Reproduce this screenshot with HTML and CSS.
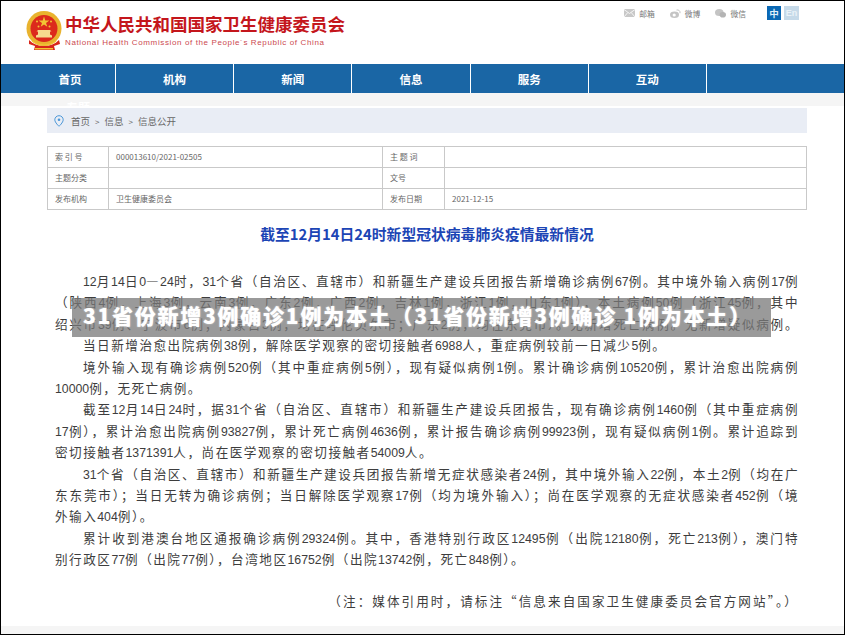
FILE: index.html
```html
<!DOCTYPE html>
<html lang="zh">
<head>
<meta charset="utf-8">
<title>截至12月14日24时新型冠状病毒肺炎疫情最新情况</title>
<link rel="stylesheet" href="styles.css">
</head>
<body>
<div class="page">
  <header class="top">
    <div class="brand">
      <svg class="emblem" viewBox="0 0 36 40" width="36" height="40" aria-hidden="true">
        <circle cx="18" cy="17.500" r="17.500" fill="#e9b32e"/>
        <circle cx="18" cy="17.500" r="13.500" fill="#dc2a1c"/>
        <polygon points="18,5.500 19.300,9.500 23.400,9.500 20,11.900 21.300,15.800 18,13.400 14.700,15.800 16,11.900 12.600,9.500 16.700,9.500" fill="#f2c534"/>
        <circle cx="11" cy="10.500" r="1" fill="#f2c534"/><circle cx="12.500" cy="15.500" r="1" fill="#f2c534"/>
        <circle cx="25" cy="10.500" r="1" fill="#f2c534"/><circle cx="23.500" cy="15.500" r="1" fill="#f2c534"/>
        <path d="M12 19h12l1.500 1.500h-1.500v3l2 1v2h-16v-2l2-1v-3h-1.500z" fill="#f6dc8e"/>
        <path d="M3 29c4 4 9 6 15 6s11-2 15-6l1 4-6 2 1 4H8l1-4-6-2z" fill="#d8261a"/>
        <path d="M9 37h18v1.500H9z" fill="#f2c534"/>
        <path d="M6 30c3 2.500 7 4 12 4s9-1.500 12-4" fill="none" stroke="#f2c534" stroke-width="1.200"/>
      </svg>
      <div class="brand-text">
        <div class="brand-cn">中华人民共和国国家卫生健康委员会</div>
        <div class="brand-en">National Health Commission of the People´s Republic of China</div>
      </div>
    </div>
    <div class="tools">
      <span class="tool">
        <svg viewBox="0 0 11 8" width="11" height="8" aria-hidden="true"><rect width="11" height="8" fill="#c8c8c8"/><path d="M0 .5l5.500 4 5.500-4M0 8l3.800-4.500M11 8L7.200 3.500" fill="none" stroke="#fff" stroke-width=".8"/></svg>
        邮箱</span>
      <span class="tool">
        <svg viewBox="0 0 11 9" width="11" height="9" aria-hidden="true"><ellipse cx="4.500" cy="5.700" rx="4.500" ry="3.300" fill="#c4c4c4"/><circle cx="4.200" cy="6" r="1.600" fill="#fff"/><path d="M6.500 1c2.200-.5 4 1 3.500 3.200" fill="none" stroke="#c4c4c4"/></svg>
        微博</span>
      <span class="tool">
        <svg viewBox="0 0 11 9" width="11" height="9" aria-hidden="true"><ellipse cx="4.300" cy="3.500" rx="4.300" ry="3.500" fill="#c4c4c4"/><ellipse cx="7.800" cy="5.800" rx="3.200" ry="2.800" fill="#b4b4b4"/></svg>
        微信</span>
      <span class="lang lang-cn">中</span>
      <span class="lang lang-en">En</span>
    </div>
  </header>

  <nav class="nav">
    <a class="nav-item nav-first">首页</a>
    <a class="nav-item">机构</a>
    <a class="nav-item">新闻</a>
    <a class="nav-item">信息</a>
    <a class="nav-item">服务</a>
    <a class="nav-item">互动</a>
  </nav>
  <div class="strip">专题</div>

  <main class="main">
    <div class="crumb">
      <svg viewBox="0 0 10 12" width="10" height="12" aria-hidden="true"><path d="M5 .7C2.600.7.800 2.500.800 4.800.800 7.500 5 11.300 5 11.300s4.200-3.800 4.200-6.500C9.200 2.500 7.400.7 5 .7z" fill="none" stroke="#4b97d8" stroke-width="1"/><circle cx="5" cy="4.700" r="1.300" fill="#4b97d8"/></svg>
      <span class="crumb-path">首页<i>&gt;</i>信息<i>&gt;</i>信息公开</span>
    </div>

    <div class="meta">
      <div class="cell">索 引 号</div><div class="cell cell-val">000013610/2021-02505</div><div class="cell">主 题 词</div><div class="cell"></div>
      <div class="cell">主题分类</div><div class="cell"></div><div class="cell">文号</div><div class="cell"></div>
      <div class="cell">发布机构</div><div class="cell cell-val">卫生健康委员会</div><div class="cell">发布日期</div><div class="cell cell-val">2021-12-15</div>
    </div>

    <h1 class="title">截至12月14日24时新型冠状病毒肺炎疫情最新情况</h1>

    <article class="body">
      <p class="ln in"><span class="n">12</span>月<span class="n">14</span>日<span class="n">0</span>—<span class="n">24</span>时，<span class="n">31</span>个省（自治区、直辖市）和新疆生产建设兵团报告新增确诊病例<span class="n">67</span>例。其中境外输入病例<span class="n">17</span>例</p>
      <p class="ln">（陕西<span class="n">4</span>例，上海<span class="n">3</span>例，云南<span class="n">3</span>例，广东<span class="n">2</span>例，广西<span class="n">2</span>例，吉林<span class="n">1</span>例，浙江<span class="n">1</span>例，山东<span class="n">1</span>例），本土病例<span class="n">50</span>例（浙江<span class="n">45</span>例，其中</p>
      <p class="ln">绍兴市<span class="n">39</span>例、宁波市<span class="n">6</span>例；内蒙古<span class="n">3</span>例，均在呼伦贝尔市；广东<span class="n">2</span>例，均在东莞市）。无新增死亡病例。无新增疑似病例。</p>
      <p class="ln in end">当日新增治愈出院病例<span class="n">38</span>例，解除医学观察的密切接触者<span class="n">6988</span>人，重症病例较前一日减少<span class="n">5</span>例。</p>
      <p class="ln in">境外输入现有确诊病例<span class="n">520</span>例（其中重症病例<span class="n">5</span>例），现有疑似病例<span class="n">1</span>例。累计确诊病例<span class="n">10520</span>例，累计治愈出院病例</p>
      <p class="ln end"><span class="n">10000</span>例，无死亡病例。</p>
      <p class="ln in">截至<span class="n">12</span>月<span class="n">14</span>日<span class="n">24</span>时，据<span class="n">31</span>个省（自治区、直辖市）和新疆生产建设兵团报告，现有确诊病例<span class="n">1460</span>例（其中重症病例</p>
      <p class="ln"><span class="n">17</span>例），累计治愈出院病例<span class="n">93827</span>例，累计死亡病例<span class="n">4636</span>例，累计报告确诊病例<span class="n">99923</span>例，现有疑似病例<span class="n">1</span>例。累计追踪到</p>
      <p class="ln end">密切接触者<span class="n">1371391</span>人，尚在医学观察的密切接触者<span class="n">54009</span>人。</p>
      <p class="ln in"><span class="n">31</span>个省（自治区、直辖市）和新疆生产建设兵团报告新增无症状感染者<span class="n">24</span>例，其中境外输入<span class="n">22</span>例，本土<span class="n">2</span>例（均在广</p>
      <p class="ln">东东莞市）；当日无转为确诊病例；当日解除医学观察<span class="n">17</span>例（均为境外输入）；尚在医学观察的无症状感染者<span class="n">452</span>例（境</p>
      <p class="ln end">外输入<span class="n">404</span>例）。</p>
      <p class="ln in">累计收到港澳台地区通报确诊病例<span class="n">29324</span>例。其中，香港特别行政区<span class="n">12495</span>例（出院<span class="n">12180</span>例，死亡<span class="n">213</span>例），澳门特</p>
      <p class="ln end">别行政区<span class="n">77</span>例（出院<span class="n">77</span>例），台湾地区<span class="n">16752</span>例（出院<span class="n">13742</span>例，死亡<span class="n">848</span>例）。</p>
      <p class="note">（注：媒体引用时，请标注“信息来自国家卫生健康委员会官方网站”。）</p>
    </article>
  </main>
  <div class="foot"></div>

  <div class="banner">31省份新增3例确诊1例为本土（31省份新增3例确诊 1例为本土）</div>
</div>
</body>
</html>
```

FILE: styles.css
```css
* { box-sizing: border-box; }
html, body { margin: 0; padding: 0; background: #fff; }
body { width: 845px; height: 635px; overflow: hidden; font-family: "Noto Sans CJK SC", "Liberation Sans", sans-serif; color: #333; }
.page { position: relative; height: 635px; display: flex; flex-direction: column; border: 1px solid #000; overflow: hidden; }

.top { height: 63px; flex: none; display: flex; justify-content: space-between; align-items: flex-start; }
.brand { display: flex; gap: 3px; padding: 10px 0 0 25px; }
.emblem { display: block; }
.brand-text { padding-top: 3px; }
.brand-cn { font-size: 17.500px; line-height: 20px; font-weight: 700; color: #c4161c; white-space: nowrap; }
.brand-en { font-family: "Liberation Sans", sans-serif; font-size: 8px; line-height: 10px; margin-top: 4px; letter-spacing: .62px; color: #cc4a50; white-space: nowrap; }

.tools { display: flex; align-items: center; height: 14px; margin: 5px 45px 0 0; font-size: 7.800px; color: #777; }
.tool { display: flex; align-items: center; gap: 4px; margin-right: 15px; }
.lang { width: 14px; height: 14px; display: flex; align-items: center; justify-content: center; font-size: 9.500px; font-weight: 700; color: #dfeefa; background: #0a68b4; }
.lang-cn { margin-left: 6px; margin-right: 3px; }
.lang-en { width: 15px; background: #c6dae9; color: #eaf2f8; font-family: "Liberation Sans", sans-serif; font-size: 9px; }

.nav { display: flex; height: 29px; flex: none; background: #1a66a5; }
.nav-item { width: 118.200px; border-right: 1px solid #fff; display: flex; align-items: center; justify-content: center; font-size: 11.500px; font-weight: 700; color: #fff; }
.nav-first { width: 115px; padding-left: 24px; }
.strip { height: 13px; flex: none; padding: 8px 0 0 65px; overflow: hidden; background: #f5f5f5; color: #fff; font-size: 12px; font-weight: 700; line-height: 14px; }

.main { flex: 1; min-height: 0; padding: 2px 37px 0 46px; }
.crumb { height: 25px; background: #e9edf5; display: flex; align-items: center; gap: 7px; padding-left: 7px; }
.crumb-path { padding-top: 1px; font-size: 9.500px; color: #666; }
.crumb-path i { font-style: normal; margin: 0 5px; font-size: 8px; }

.meta { display: grid; grid-template-columns: 61px 274px 62px 1fr; grid-auto-rows: 21px; height: 64px; margin-top: 13px; border-top: 1px solid #c9c9c9; border-left: 1px solid #c9c9c9; }
.cell { border-right: 1px solid #c9c9c9; border-bottom: 1px solid #c9c9c9; padding-left: 7px; font-size: 8px; line-height: 19px; color: #666; }

.title { margin: 13px 0 0; font-size: 14.800px; line-height: 22px; font-weight: 700; color: #1c45b5; text-align: center; white-space: nowrap; }

.body { margin-top: 25px; padding-left: 8px; width: 752px; font-size: 12.600px; letter-spacing: 1.500px; color: #3d3d3d; }
.ln { margin: 0; height: 21.400px; line-height: 21.400px; text-align: justify; text-align-last: justify; white-space: nowrap; overflow: hidden; }
.n { font-family: "Liberation Sans", sans-serif; font-size: 12.300px; letter-spacing: 0; }
.in { padding-left: 28px; }
.end { text-align-last: left; }
.note { margin: 22px 0 0; line-height: 20px; letter-spacing: 2.050px; text-align: right; white-space: nowrap; }

.foot { height: 8px; flex: none; background: #f5f5f5; }

.banner { position: absolute; left: 71px; top: 297px; width: 699px; height: 39px; padding-left: 11px; background: rgba(120,120,120,.75); color: #fff; font-size: 21px; font-weight: 900; letter-spacing: 1.750px; line-height: 35px; white-space: nowrap; text-shadow: 0 0 2px rgba(255,255,255,.6); }
```
